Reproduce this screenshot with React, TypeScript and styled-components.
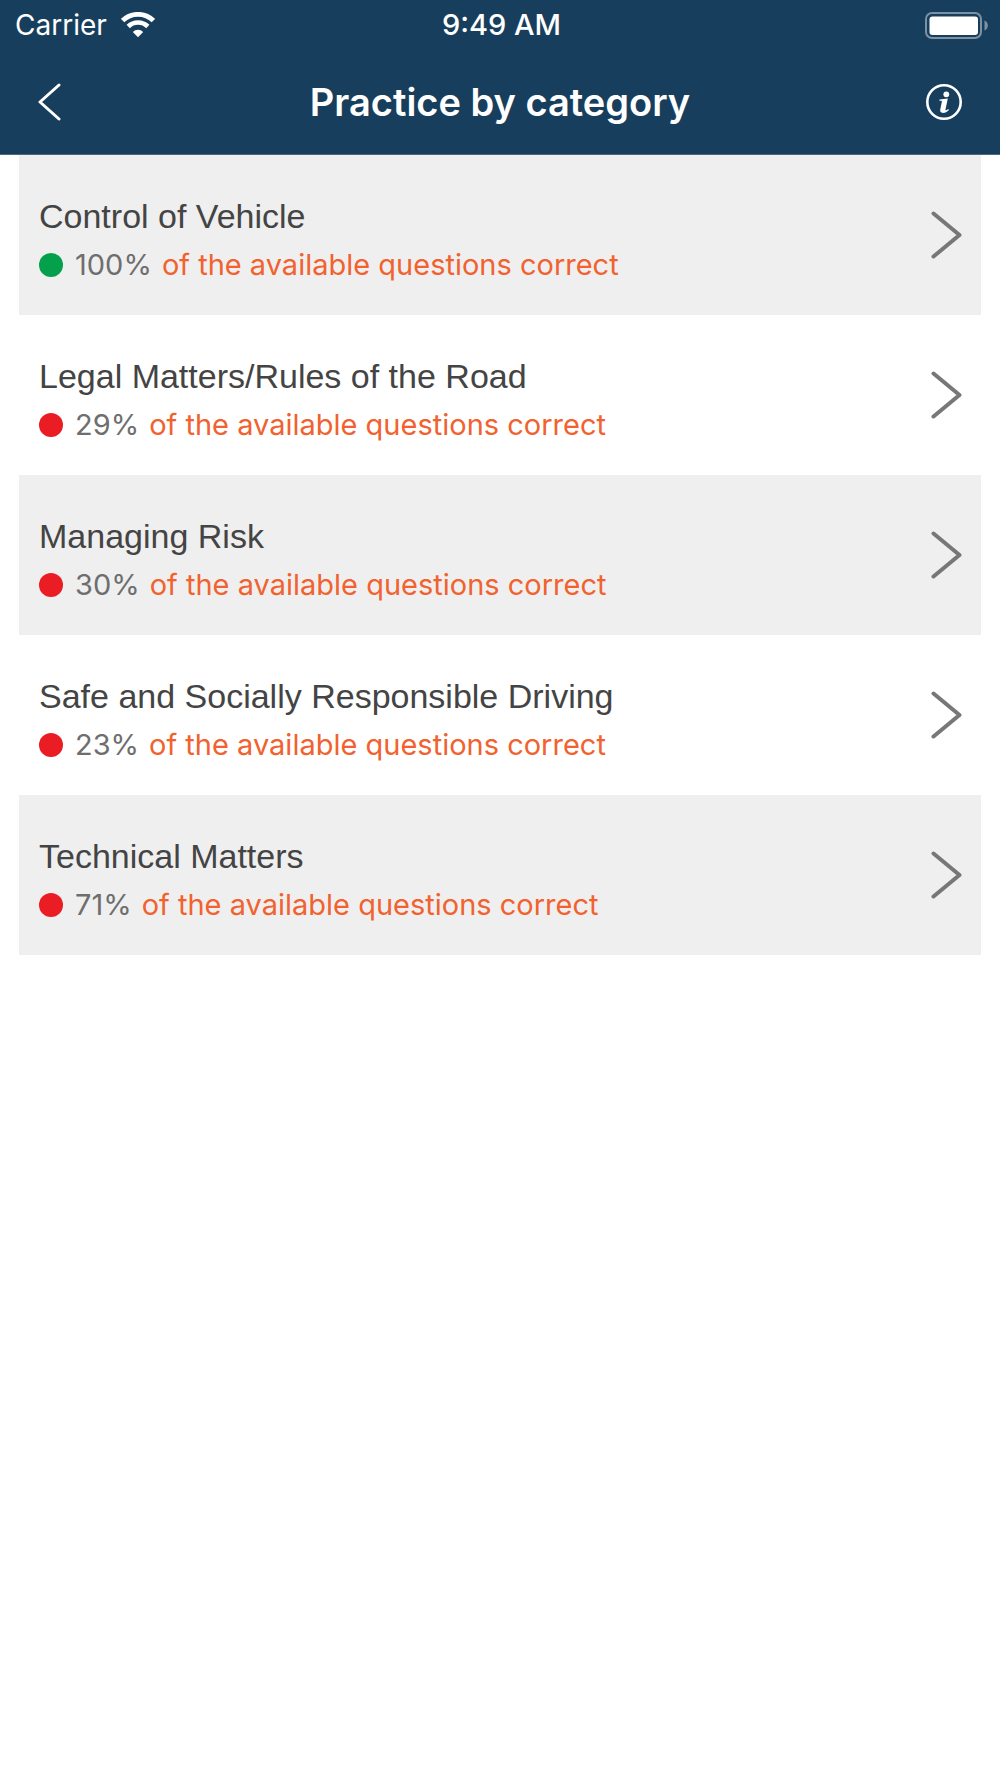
import React from "react";
import styled, { createGlobalStyle } from "styled-components";

const GlobalStyle = createGlobalStyle`
  *, *::before, *::after { box-sizing: border-box; }
  body {
    margin: 0;
    background: #ffffff;
    font-family: Inter, Roboto, sans-serif;
  }
`;

const Header = styled.header`
  background: #183e5d;
  color: #ffffff;
  border-bottom: 1px solid #4a6883;
`;

const StatusBar = styled.div`
  display: grid;
  grid-template-columns: 1fr auto 1fr;
  align-items: center;
  height: 50px;
  padding: 0 12px 0 15px;
  font-size: 28px;
  line-height: 34px;
`;

const Carrier = styled.div`
  display: flex;
  align-items: center;
  gap: 14px;
`;

const Clock = styled.time`
  font-size: 29px;
  font-weight: 500;
`;

const BatteryIcon = styled.svg`
  justify-self: end;
`;

const NavBar = styled.nav`
  display: grid;
  grid-template-columns: 60px 1fr 60px;
  align-items: center;
  height: 104px;
  padding: 0 28px;
`;

const NavButton = styled.button<{ $end?: boolean }>`
  display: flex;
  justify-content: ${({ $end }) => ($end ? "flex-end" : "flex-start")};
  padding: 10px;
  border: 0;
  background: none;
  color: inherit;
  cursor: pointer;
`;

const Title = styled.h1`
  margin: 0;
  font-size: 38px;
  font-weight: 600;
  line-height: 46px;
  text-align: center;
`;

const List = styled.ul`
  margin: 0;
  padding: 0 19px;
  list-style: none;
`;

const Item = styled.li`
  &:nth-child(odd) {
    background: #efefef;
  }
`;

const Row = styled.a`
  display: flex;
  align-items: center;
  justify-content: space-between;
  height: 160px;
  padding: 0 19px 0 20px;
  color: #444444;
  text-decoration: none;
`;

const Details = styled.div`
  display: flex;
  flex-direction: column;
  gap: 10px;
  padding-top: 10px;
`;

const Category = styled.span`
  font-family: "Liberation Sans", Arial, sans-serif;
  font-size: 34px;
  line-height: 40px;
`;

const Score = styled.span`
  display: flex;
  align-items: center;
  font-size: 29px;
  line-height: 38px;
`;

const Dot = styled.span<{ $passed: boolean }>`
  width: 24px;
  height: 24px;
  margin-right: 12px;
  border-radius: 50%;
  background: ${({ $passed }) => ($passed ? "#04a04c" : "#ea1c24")};
`;

const Percent = styled.span`
  margin-right: 10px;
  color: #6e6e6e;
`;

const Caption = styled.span`
  color: #f1622f;
`;

const categories = [
  { name: "Control of Vehicle", percent: 100 },
  { name: "Legal Matters/Rules of the Road", percent: 29 },
  { name: "Managing Risk", percent: 30 },
  { name: "Safe and Socially Responsible Driving", percent: 23 },
  { name: "Technical Matters", percent: 71 },
];

const Wifi = () => (
  <svg width="34" height="26" viewBox="0 0 34 26" fill="none" stroke="currentColor" aria-hidden="true">
    <path d="M1.6 8.600a22 22 0 0 1 30.800 0" strokeWidth="4.800" />
    <path d="M7.200 14.500a14 14 0 0 1 19.600 0" strokeWidth="4.600" />
    <path d="M17 25.200l-5.200-5.200a7.400 7.400 0 0 1 10.400 0z" fill="currentColor" stroke="none" />
  </svg>
);

const Battery = () => (
  <BatteryIcon width="63" height="27" viewBox="0 0 63 27" aria-label="Battery full">
    <rect x="1" y="1" width="55" height="25" rx="6" fill="none" stroke="#7d91a3" strokeWidth="2" />
    <rect x="4.500" y="4.500" width="48.500" height="18.500" rx="3" fill="#ffffff" />
    <path d="M59.500 8.500q3.300 1.400 3.300 5t-3.300 5z" fill="#7d91a3" />
  </BatteryIcon>
);

const BackArrow = () => (
  <svg width="24" height="38" viewBox="0 0 24 38" fill="none" stroke="currentColor" strokeWidth="3" strokeLinecap="round" strokeLinejoin="round" aria-hidden="true">
    <path d="M21 2L2 19l19 17" />
  </svg>
);

const Info = () => (
  <svg width="36" height="36" viewBox="0 0 36 36" aria-hidden="true">
    <circle cx="18" cy="18" r="16.700" fill="none" stroke="currentColor" strokeWidth="2.600" />
    <circle cx="20.300" cy="10.300" r="2.900" fill="currentColor" />
    <path d="M13.600 15.500q4-.3 8.200-.9l-2.300 10.800c-.3 1.300.6 1.300 2.800-.4l.6.900c-1.800 2-3.800 3-5.900 3-2.300 0-3.200-1.300-2.700-3.600l1.500-7.200c.2-1-.1-1.300-1-1.300h-1.500z" fill="currentColor" />
  </svg>
);

const Chevron = () => (
  <svg width="32" height="50" viewBox="0 0 32 50" fill="none" stroke="#777777" strokeWidth="4" strokeLinecap="round" strokeLinejoin="round" aria-hidden="true">
    <path d="M3.500 3.500l26 21.500-26 21.500" />
  </svg>
);

export default function App() {
  return (
    <>
      <GlobalStyle />
      <Header>
        <StatusBar>
          <Carrier>
            Carrier
            <Wifi />
          </Carrier>
          <Clock>9:49 AM</Clock>
          <Battery />
        </StatusBar>
        <NavBar>
          <NavButton type="button" aria-label="Back">
            <BackArrow />
          </NavButton>
          <Title>Practice by category</Title>
          <NavButton type="button" aria-label="Information" $end>
            <Info />
          </NavButton>
        </NavBar>
      </Header>
      <main>
        <List>
          {categories.map(({ name, percent }) => (
            <Item key={name}>
              <Row href="#">
                <Details>
                  <Category>{name}</Category>
                  <Score>
                    <Dot $passed={percent === 100} />
                    <Percent>{percent}%</Percent>
                    <Caption>of the available questions correct</Caption>
                  </Score>
                </Details>
                <Chevron />
              </Row>
            </Item>
          ))}
        </List>
      </main>
    </>
  );
}
